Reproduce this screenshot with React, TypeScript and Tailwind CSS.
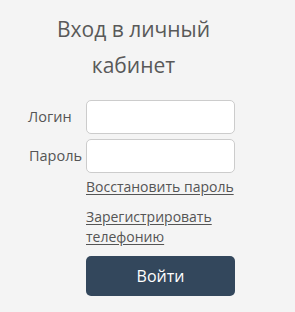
export default function App() {
  return (
    <div className="min-h-screen bg-[#f4f4f4] font-['Open_Sans',sans-serif] text-[#555]">
      <h1 className="w-[267px] pt-[11px] text-center text-[21px] leading-[36px] text-[#595959]">
        Вход в личный
        <br />
        кабинет
      </h1>

      <form className="mt-[17px] flex flex-col" onSubmit={(e) => e.preventDefault()}>
        <div className="flex items-center">
          <label className="w-[86px] pl-[28px] text-[14.5px]">Логин</label>
          <input
            type="text"
            className="h-[34px] w-[149px] rounded-[5px] border border-[#cccccc] bg-white px-2 text-[14px] outline-none"
          />
        </div>
        <div className="mt-[5px] flex items-center">
          <label className="w-[86px] pl-[29px] text-[14.5px]">Пароль</label>
          <input
            type="password"
            className="h-[34px] w-[149px] rounded-[5px] border border-[#cccccc] bg-white px-2 text-[14px] outline-none"
          />
        </div>

        <div className="ml-[86px] mt-[4px] flex w-[160px] flex-col text-[14px] leading-[20px]">
          <a href="#" className="underline underline-offset-2">
            Восстановить пароль
          </a>
          <a href="#" className="mt-[10px] underline underline-offset-2">
            Зарегистрировать телефонию
          </a>
        </div>

        <button
          type="submit"
          className="ml-[86px] mt-[9px] h-[40px] w-[149px] rounded-[5px] bg-[#33475c] text-[16px] text-white"
        >
          Войти
        </button>
      </form>
    </div>
  );
}
